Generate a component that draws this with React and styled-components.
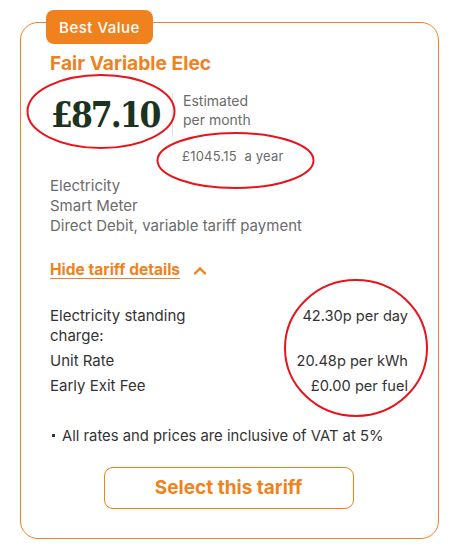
import React from 'react';
import styled, { createGlobalStyle } from 'styled-components';

const GlobalStyle = createGlobalStyle`
  body {
    margin: 0;
    background: #fff;
    font-family: Inter, "Liberation Sans", sans-serif;
  }
`;

const orange = '#f0821e';

const Page = styled.div`
  position: relative;
  width: 456px;
  height: 552px;
  padding: 22px 0 0 20px;
  box-sizing: border-box;
`;

const Card = styled.section`
  position: relative;
  width: 419px;
  height: 517px;
  box-sizing: border-box;
  border: 1.5px solid ${orange};
  border-radius: 18px;
  padding: 27px 29px 0 29px;
`;

const Badge = styled.div`
  position: absolute;
  top: -13px;
  left: 25px;
  width: 107px;
  height: 34px;
  border-radius: 8px;
  background: ${orange};
  color: #fff;
  font-size: 15px;
  font-weight: 500;
  letter-spacing: 0.5px;
  display: flex;
  align-items: center;
  justify-content: center;
`;

const Title = styled.h2`
  margin: 0;
  color: ${orange};
  font-size: 19.2px;
  font-weight: 700;
  line-height: 26px;
`;

const PriceRow = styled.div`
  display: flex;
  margin-top: 17px;
`;

const Price = styled.div`
  width: 121px;
  height: 44px;
  border-right: 1px solid #e4e4e4;
  font-family: "DejaVu Serif", "Liberation Serif", serif;
  font-stretch: condensed;
  font-weight: 700;
  font-size: 35px;
  letter-spacing: -2px;
  color: #1b3320;
  line-height: 44px;
  padding-left: 1px;
`;

const PriceNote = styled.div`
  padding-left: 10px;
  color: #6b6b6b;
  font-size: 14px;
  line-height: 19px;
  margin-top: -2px;
`;

const YearNote = styled.div`
  margin: 10px 0 0 132px;
  color: #6b6b6b;
  font-size: 13px;
  letter-spacing: 0.2px;
  line-height: 18px;
  white-space: pre;
`;

const Features = styled.div`
  margin-top: 11px;
  color: #6b6b6b;
  font-size: 15px;
  line-height: 20px;
`;

const Toggle = styled.button`
  display: flex;
  align-items: center;
  gap: 13px;
  margin-top: 24px;
  padding: 0;
  border: 0;
  background: none;
  color: ${orange};
  font-family: inherit;
  font-size: 15.5px;
  font-weight: 700;
  line-height: 20px;

  span {
    text-decoration: underline;
    text-underline-offset: 3px;
    text-decoration-thickness: 1px;
  }
`;

const Details = styled.div`
  display: flex;
  flex-direction: column;
  gap: 5px;
  margin-top: 26px;
`;

const DetailRow = styled.div`
  display: flex;
  justify-content: space-between;
  color: #333;
  font-size: 15px;
  line-height: 20px;
  padding-right: 1px;
`;

const DetailLabel = styled.div`
  width: 150px;
`;

const DetailValue = styled.div`
  font-size: 14.6px;
  text-align: right;
`;

const Note = styled.ul`
  margin: 30px 0 0;
  padding: 0;
  list-style: none;
  color: #333;
  font-size: 14.8px;
  line-height: 20px;

  li::before {
    content: '';
    display: inline-block;
    width: 3px;
    height: 3px;
    background: #333;
    margin: 0 7px 3px 2px;
    vertical-align: middle;
  }
`;

const ButtonWrap = styled.div`
  display: flex;
  justify-content: center;
  margin-top: 21px;
  padding-right: 2px;
`;

const SelectButton = styled.button`
  width: 250px;
  height: 42px;
  border: 1.5px solid ${orange};
  border-radius: 9px;
  background: #fff;
  color: ${orange};
  font-family: inherit;
  font-size: 19px;
  font-weight: 700;
  padding-bottom: 2px;
`;

const Marks = styled.svg`
  position: absolute;
  inset: 0;
  pointer-events: none;
`;

const ChevronUp = () => (
  <svg width="14" height="9" viewBox="0 0 14 9" fill="none">
    <path d="M2 7.5L7 2.5L12 7.5" stroke={orange} strokeWidth="2.4" strokeLinecap="round" />
  </svg>
);

const details = [
  ['Electricity standing charge:', '42.30p per day'],
  ['Unit Rate', '20.48p per kWh'],
  ['Early Exit Fee', '£0.00 per fuel'],
];

export default function App() {
  return (
    <Page>
      <GlobalStyle />
      <Card>
        <Badge>Best Value</Badge>
        <Title>Fair Variable Elec</Title>
        <PriceRow>
          <Price>£87.10</Price>
          <PriceNote>
            Estimated
            <br />
            per month
          </PriceNote>
        </PriceRow>
        <YearNote>£1045.15  a year</YearNote>
        <Features>
          <div>Electricity</div>
          <div>Smart Meter</div>
          <div>Direct Debit, variable tariff payment</div>
        </Features>
        <Toggle>
          <span>Hide tariff details</span>
          <ChevronUp />
        </Toggle>
        <Details>
          {details.map(([label, value]) => (
            <DetailRow key={label}>
              <DetailLabel>{label}</DetailLabel>
              <DetailValue>{value}</DetailValue>
            </DetailRow>
          ))}
        </Details>
        <Note>
          <li>All rates and prices are inclusive of VAT at 5%</li>
        </Note>
        <ButtonWrap>
          <SelectButton>Select this tariff</SelectButton>
        </ButtonWrap>
      </Card>
      <Marks width="456" height="552">
        <g fill="none" stroke="#e8141b" strokeWidth="2">
          <ellipse cx="101" cy="111.5" rx="73.5" ry="36.5" />
          <ellipse cx="235.5" cy="160.5" rx="78" ry="27.5" />
          <ellipse cx="356" cy="348" rx="71" ry="68" />
        </g>
      </Marks>
    </Page>
  );
}
